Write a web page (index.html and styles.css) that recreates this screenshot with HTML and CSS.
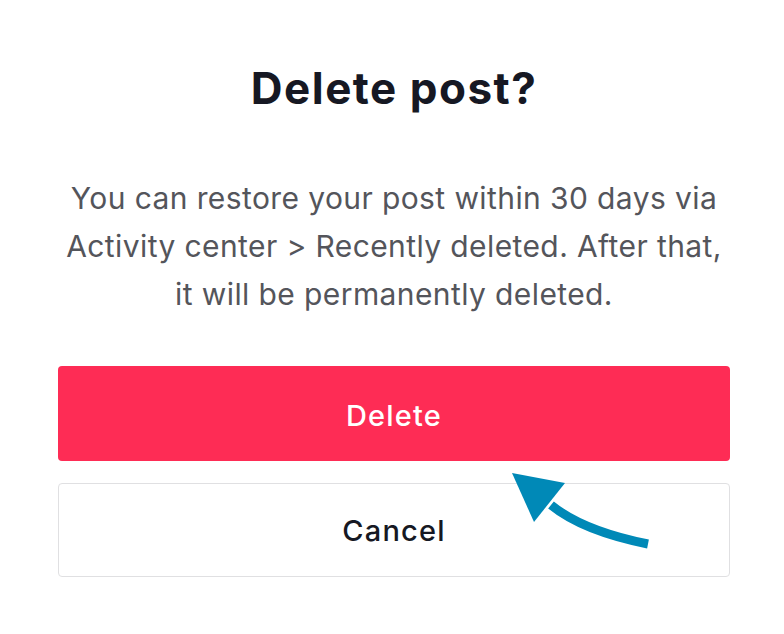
FILE: index.html
```html
<!DOCTYPE html>
<html lang="en">
<head>
    <meta charset="UTF-8">
    <meta name="viewport" content="width=device-width, initial-scale=1.0">
    <title>Delete post?</title>
    <link rel="stylesheet" href="styles.css">
</head>
<body>
    <div class="dialog">
        <h1 class="dialog-title">Delete post?</h1>
        <p class="dialog-text">You can restore your post within 30 days via Activity center &gt; Recently deleted. After that, it will be permanently deleted.</p>

        <div class="actions">
            <button class="btn btn-delete">Delete</button>
            <button class="btn btn-cancel">Cancel</button>

            <!-- pointer arrow drawn over the buttons -->
            <svg class="hint-arrow" width="150" height="90" viewBox="0 0 150 90">
                <path d="M51 42 Q83 68 148 81" fill="none" stroke="#0089b7" stroke-width="9"/>
                <polygon points="12,10 65,20 34,59" fill="#0089b7"/>
            </svg>
        </div>
    </div>
</body>
</html>
```

FILE: styles.css
```css
body {
    margin: 0;
    padding: 0;
    background: #fff;
    font-family: Inter, Roboto, "Liberation Sans", sans-serif;
}

.dialog {
    padding: 62px 54px 0 58px;
    text-align: center;
}

.dialog-title {
    margin: 0;
    font-size: 44px;
    line-height: 53px;
    font-weight: 700;
    letter-spacing: 1.5px;
    color: #161823;
}

.dialog-text {
    margin: 59px 0 0;
    padding: 0;
    font-size: 30px;
    line-height: 48px;
    letter-spacing: 0.4px;
    color: #54555b;
}

.actions {
    position: relative;
    display: flex;
    flex-direction: column;
    gap: 22px;
    margin-top: 48px;
}

.btn {
    display: block;
    width: 100%;
    height: 95px;
    border-radius: 4px;
    font-family: Inter, Roboto, "Liberation Sans", sans-serif;
    font-size: 29px;
    font-weight: 500;
    letter-spacing: 1.2px;
    cursor: pointer;
}

.btn-delete {
    padding-top: 4px;
    background-color: #fe2c55;
    border: none;
    color: #fff;
}

.btn-cancel {
    height: 94px;
    background-color: #fff;
    border: 1px solid #e0e0e2;
    color: #161823;
}

.hint-arrow {
    position: absolute;
    left: 442px;
    top: 97px;
}
```
